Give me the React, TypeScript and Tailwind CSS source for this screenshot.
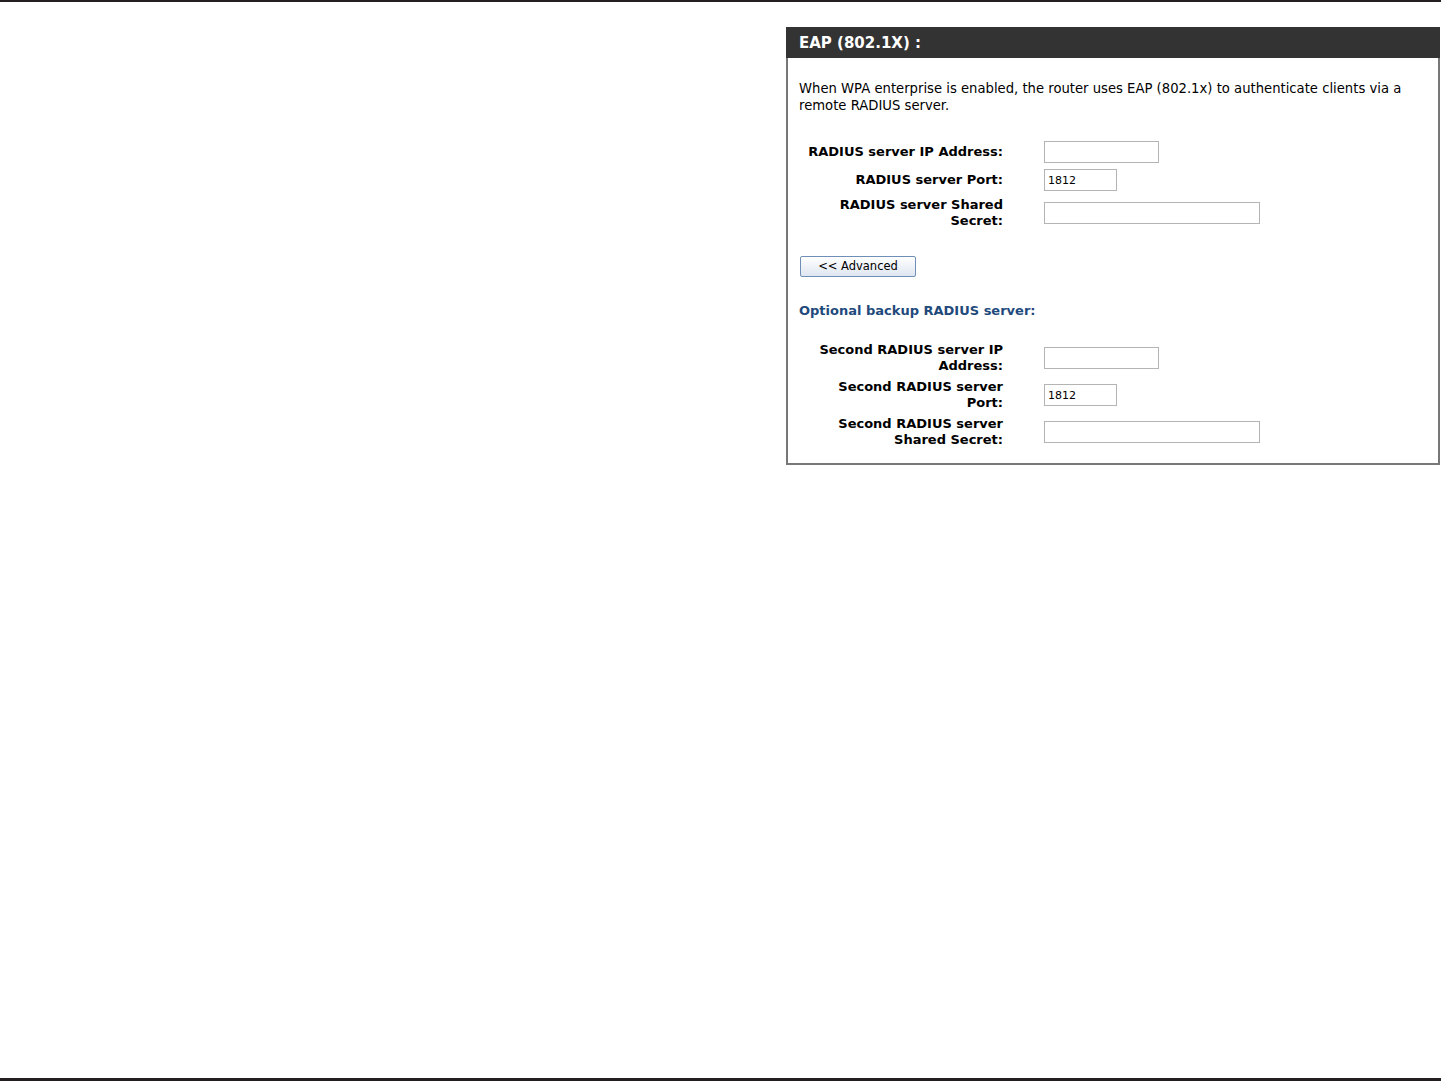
import React from "react";

const font = { fontFamily: '"DejaVu Sans", Verdana, sans-serif' };

function Field({ w, value }: { w: string; value?: string }) {
  return (
    <input
      readOnly
      value={value ?? ""}
      className={`${w} h-[22px] border border-[#b4b4b4] bg-white px-[3px] text-[11px] text-black outline-none`}
      style={font}
    />
  );
}

function Row({ label, children }: { label: React.ReactNode; children: React.ReactNode }) {
  return (
    <div className="flex items-center">
      <div className="w-[204px] shrink-0 text-right text-[13px] font-bold leading-[16px] text-black">{label}</div>
      <div className="ml-[41px] flex">{children}</div>
    </div>
  );
}

export default function App() {
  return (
    <div className="relative h-[1081px] w-[1441px] overflow-hidden bg-white" style={font}>
      <div className="h-[2px] w-full bg-[#231f20]" />
      <div className="ml-[786px] mt-[25px] w-[654px] border-2 border-t-0 border-[#777777]">
        <div className="-mx-[2px] flex h-[31px] items-center bg-[#333333] pl-[13px] pt-[1px] text-[15px] font-bold text-white">
          EAP (802.1X) :
        </div>
        <div className="pl-[11px] pr-[10px] pb-[15px]">
          <p className="mt-[22px] text-[13.2px] leading-[17px] text-black">
            When WPA enterprise is enabled, the router uses EAP (802.1x) to authenticate clients via a remote RADIUS server.
          </p>
          <div className="mt-[27px] flex flex-col gap-[6px]">
            <Row label="RADIUS server IP Address:">
              <Field w="w-[115px]" />
            </Row>
            <Row label="RADIUS server Port:">
              <Field w="w-[73px]" value="1812" />
            </Row>
            <Row label={<>RADIUS server Shared<br />Secret:</>}>
              <Field w="w-[216px]" />
            </Row>
          </div>
          <button
            className="mt-[27px] ml-[1px] flex h-[21px] w-[116px] items-center justify-center rounded-[2px] border border-[#6f8fb8] bg-gradient-to-b from-[#ffffff] to-[#dfe6f0] text-[11.5px] text-black"
            style={font}
          >
            &lt;&lt; Advanced
          </button>
          <div className="mt-[26px] text-[13px] font-bold leading-[16px] text-[#1f4a7c]">Optional backup RADIUS server:</div>
          <div className="mt-[23px] flex flex-col gap-[5px]">
            <Row label={<>Second RADIUS server IP<br />Address:</>}>
              <Field w="w-[115px]" />
            </Row>
            <Row label={<>Second RADIUS server<br />Port:</>}>
              <Field w="w-[73px]" value="1812" />
            </Row>
            <Row label={<>Second RADIUS server<br />Shared Secret:</>}>
              <Field w="w-[216px]" />
            </Row>
          </div>
        </div>
      </div>
      <div className="absolute bottom-0 left-0 h-[3px] w-full bg-[#231f20]" />
    </div>
  );
}
